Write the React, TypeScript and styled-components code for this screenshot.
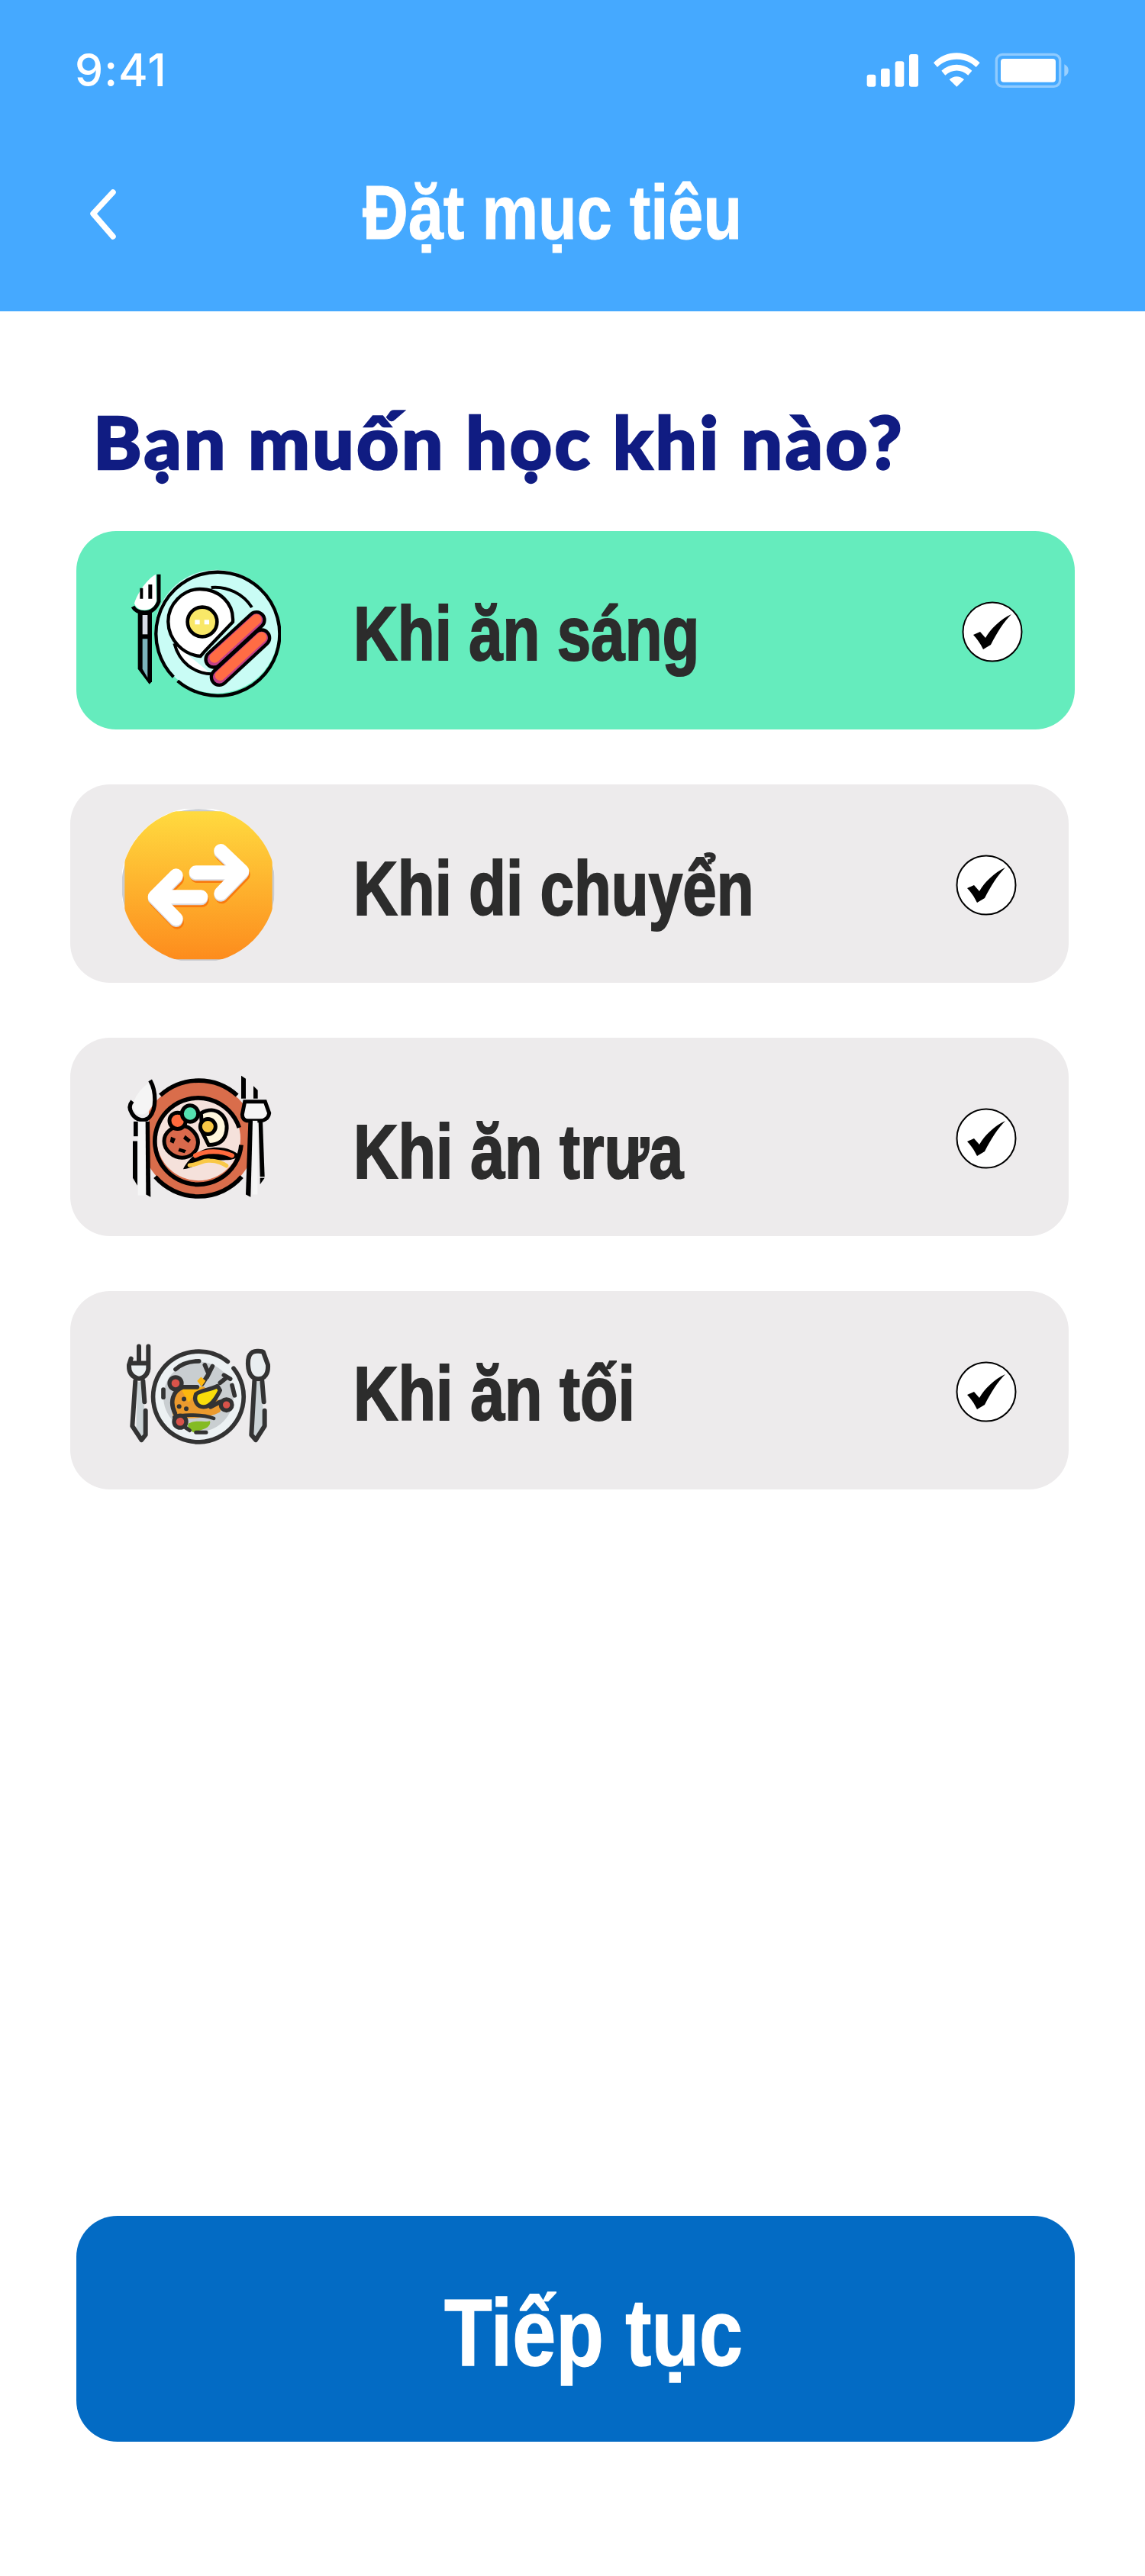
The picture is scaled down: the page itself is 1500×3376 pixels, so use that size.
import React from "react";
import styled, { createGlobalStyle } from "styled-components";

const Global = createGlobalStyle`
  html, body { margin: 0; padding: 0; background: #fff; }
  #root { width: 1500px; height: 3376px; overflow: hidden; }
`;

const sans = `"Liberation Sans", sans-serif`;

const Page = styled.main`
  width: 1500px;
  height: 3376px;
  display: flex;
  flex-direction: column;
  background: #fff;
`;

const Header = styled.header`
  height: 408px;
  background: #45a9ff;
  color: #fff;
  flex: none;
  display: flex;
  flex-direction: column;
`;

const StatusBar = styled.div`
  height: 67px;
  padding: 67px 0 0 98px;
  display: flex;
  justify-content: space-between;
  align-items: flex-start;
`;

const Time = styled.span`
  margin-top: 2px;
  font-family: "Inter", "Liberation Sans", sans-serif;
  font-size: 59px;
  font-weight: 500;
  line-height: 46px;
  letter-spacing: 1px;
`;

const StatusIcons = styled.svg`
  width: 270px;
  height: 50px;
  margin-right: 97px;
`;

const NavBar = styled.div`
  margin-top: 86px;
  height: 120px;
  padding-left: 112px;
  display: flex;
  align-items: center;
`;

const BackIcon = styled.svg`
  width: 46px;
  height: 72px;
  flex: none;
`;

const Title = styled.h1`
  margin: -4px 0 0 317px;
  font-family: ${sans};
  font-size: 101px;
  font-weight: 700;
  line-height: 116px;
  white-space: nowrap;
  transform: scaleX(0.82);
  transform-origin: left center;
  -webkit-text-stroke: 1px #fff;
`;

const Question = styled.h2`
  margin: 114px 0 0 122px;
  font-family: "Lato", "Noto Sans", sans-serif;
  font-size: 96px;
  font-weight: 900;
  line-height: 112px;
  letter-spacing: 3.4px;
  color: #101c82;
  white-space: nowrap;
  -webkit-text-stroke: 2.5px #101c82;
`;

const Options = styled.div`
  margin: 62px 0 0 92px;
  width: 1316px;
  display: flex;
  flex-direction: column;
  gap: 72px;
`;

const Option = styled.div<{ $selected?: boolean }>`
  width: 1308px;
  height: 260px;
  box-sizing: border-box;
  margin-left: ${(p) => (p.$selected ? "8px" : "0")};
  padding: 0 68px;
  border-radius: 52px;
  display: flex;
  align-items: center;
  background: ${(p) => (p.$selected ? "#65ecbd" : "#edebec")};
`;

const IconSlot = styled.svg`
  width: 200px;
  flex: none;
`;

const OptionLabel = styled.span<{ $inset: number; $drop: number; $squeeze: number }>`
  margin-left: ${(p) => p.$inset}px;
  padding-top: ${(p) => p.$drop}px;
  flex: 1;
  font-family: ${sans};
  font-size: 100px;
  font-weight: 700;
  line-height: 120px;
  color: #2c2c2c;
  white-space: nowrap;
  transform: scaleX(${(p) => p.$squeeze});
  transform-origin: left center;
  -webkit-text-stroke: 2px #2c2c2c;
`;

const Check = styled.svg`
  width: 80px;
  height: 80px;
  flex: none;
  margin-top: 4px;
`;

const Continue = styled.button`
  margin: auto 0 176px 100px;
  width: 1308px;
  height: 296px;
  padding: 8px 0 0 46px;
  border: 0;
  border-radius: 54px;
  background: #036bc4;
  color: #fff;
  font-family: ${sans};
  font-size: 125px;
  font-weight: 700;
`;

const ContinueLabel = styled.span`
  display: inline-block;
  transform: scaleX(0.82);
  -webkit-text-stroke: 1.5px #fff;
`;

const CheckMark = () => (
  <Check viewBox="0 0 80 80">
    <circle cx="40" cy="40" r="38.5" fill="#fff" stroke="#000" strokeWidth="2" />
    <path d="M15 44 L24 40 L31 48 C38 36 50 24 65 17 C55 27 46 41 38 57 L28 63 C24 55 20 49 15 44 Z" fill="#000" />
  </Check>
);

const BreakfastIcon = () => (
  <IconSlot viewBox="264 168 600 540" height="180">
    <circle cx="611" cy="443" r="243" fill="#c9fcf5" />
    <path d="M458 637 A243 243 0 1 0 442 622" fill="none" stroke="#000" strokeWidth="13" />
    <path d="M750 348 A172 172 0 0 0 590 270" fill="none" stroke="#000" strokeWidth="12" />
    <path d="M445 490 C465 565 520 605 590 610" fill="#fff" stroke="#000" strokeWidth="12" />
    <path d="M545 276 C480 276 420 335 421 405 C422 475 480 535 548 540 L565 520 L675 405 C680 330 620 276 545 276 Z" fill="#fff" stroke="#000" strokeWidth="13" />
    <circle cx="555" cy="405" r="58" fill="#f9e868" stroke="#000" strokeWidth="14" />
    <rect x="526" y="397" width="19" height="18" fill="#fff" />
    <rect x="563" y="397" width="19" height="18" fill="#fff" />
    <path d="M600 552 L768 398" stroke="#000" strokeWidth="76" strokeLinecap="round" />
    <path d="M600 552 L768 398" stroke="#c2408a" strokeWidth="50" strokeLinecap="round" />
    <path d="M603 546 L768 395" stroke="#ff6c44" strokeWidth="40" strokeLinecap="round" />
    <path d="M622 622 L788 468" stroke="#000" strokeWidth="76" strokeLinecap="round" />
    <path d="M622 622 L788 468" stroke="#c2408a" strokeWidth="50" strokeLinecap="round" />
    <path d="M625 616 L788 465" stroke="#ff6c44" strokeWidth="40" strokeLinecap="round" />
    <path d="M288 332 C300 290 340 235 372 218 L375 320 C370 350 345 358 325 358 C305 358 292 345 288 332 Z" fill="#fff" />
    <path d="M343 258 H358 V314 H343 Z M310 272 H322 V314 H310 Z" fill="#000" />
    <path d="M384 218 V325 C372 355 350 368 328 368 C305 368 290 360 282 345" fill="none" stroke="#000" strokeWidth="15" />
    <path d="M302 368 H357 V640 L347 650 L302 590 Z" fill="#000" />
    <rect x="320" y="378" width="20" height="76" fill="#d8dde6" />
    <path d="M320 472 H340 V625 L320 590 Z" fill="#7bb4bc" />
  </IconSlot>
);

const CommuteIcon = () => (
  <IconSlot viewBox="240 108 600 612" height="204">
    <defs>
      <linearGradient id="commute" x1="0" y1="0" x2="0" y2="1">
        <stop offset="0" stopColor="#ffdc40" />
        <stop offset="1" stopColor="#fd8a1c" />
      </linearGradient>
      <clipPath id="commuteClip">
        <rect x="250" y="130" width="580" height="582" />
      </clipPath>
      <clipPath id="commuteHalo">
        <rect x="240" y="120" width="598" height="597" />
      </clipPath>
    </defs>
    <circle cx="539" cy="419" r="304" fill="#fff" clipPath="url(#commuteHalo)" />
    <circle cx="540" cy="423" r="302" fill="#c9ccd2" clipPath="url(#commuteHalo)" />
    <circle cx="540" cy="421" r="305" fill="url(#commute)" clipPath="url(#commuteClip)" />
    <g fill="none" strokeWidth="54" strokeLinecap="round" strokeLinejoin="round">
      <g stroke="#f97a0e" transform="translate(4 14)">
        <path d="M530 370 H708 M628 285 L712 365 L628 452" />
        <path d="M550 466 H372 M452 382 L368 466 L452 552" />
      </g>
      <g stroke="#d9dae0" transform="translate(0 6)">
        <path d="M530 370 H708 M628 285 L712 365 L628 452" />
        <path d="M550 466 H372 M452 382 L368 466 L452 552" />
      </g>
      <g stroke="#fff">
        <path d="M530 370 H708 M628 285 L712 365 L628 452" />
        <path d="M550 466 H372 M452 382 L368 466 L452 552" />
      </g>
    </g>
  </IconSlot>
);

const LunchIcon = () => (
  <IconSlot viewBox="30 20 600 500" height="167">
    <defs>
      <clipPath id="lunchPlate">
        <rect x="135" y="40" width="392" height="470" />
      </clipPath>
    </defs>
    <circle cx="330" cy="275" r="222" fill="#d96d4b" clipPath="url(#lunchPlate)" />
    <circle cx="330" cy="275" r="165" fill="#f5e1db" />
    <g fill="none" stroke="#000" strokeLinecap="butt">
      <path d="M180 105 A225 225 0 0 1 482 105" strokeWidth="17" />
      <path d="M160 425 A225 225 0 0 0 500 425" strokeWidth="17" />
      <path d="M490 232 A170 170 0 1 0 498 300" strokeWidth="17" />
    </g>
    <path d="M340 175 C400 140 450 190 440 245 C435 280 415 300 370 300 L345 250 Z" fill="#fff6dc" stroke="#000" strokeWidth="15" />
    <circle cx="367" cy="228" r="30" fill="#f9c846" stroke="#000" strokeWidth="15" />
    <path d="M265 225 C300 225 335 265 327 300 C322 335 290 350 265 350 C230 350 195 320 195 285 C195 250 230 225 265 225 Z" fill="#d9694c" stroke="#000" strokeWidth="15" />
    <path d="M222 268 L240 275 L232 295 L218 288 Z M278 262 L300 280 L290 292 L270 275 Z M255 312 L282 320 L275 332 L250 325 Z" fill="#000" />
    <circle cx="248" cy="205" r="32" fill="#ff6a3d" stroke="#000" strokeWidth="15" />
    <circle cx="297" cy="177" r="32" fill="#55e0b0" stroke="#000" strokeWidth="15" />
    <path d="M270 395 C300 395 330 370 375 362 C420 355 470 370 490 340 C470 320 420 300 360 315 C320 325 280 370 270 395 Z" fill="#000" />
    <path d="M318 342 C360 320 420 322 462 342" fill="none" stroke="#ff6a3d" strokeWidth="18" strokeLinecap="round" />
    <path d="M295 380 C340 375 345 358 375 362 C400 362 425 372 440 382" fill="none" stroke="#f9c846" strokeWidth="16" strokeLinecap="round" />
    <path d="M135 55 C90 90 65 130 78 165 C90 185 125 190 145 150 C155 110 145 75 135 55 Z" fill="#f5f5f5" />
    <path d="M140 46 C165 90 165 160 138 190 C120 210 85 205 68 175 C55 155 60 140 70 128" fill="none" stroke="#000" strokeWidth="16" />
    <rect x="92" y="208" width="30" height="290" fill="#f5f5f5" />
    <rect x="75" y="208" width="17" height="58" fill="#000" />
    <path d="M72 285 H90 V460 L72 430 Z" fill="#000" />
    <path d="M122 208 H138 L142 505 L124 495 Z" fill="#000" />
    <path d="M498 28 L516 40 V118 H498 Z" fill="#000" />
    <path d="M546 68 L563 85 V118 H546 Z" fill="#000" />
    <path d="M512 130 H592 L608 175 C605 195 590 205 570 205 H525 C510 205 502 195 502 180 Z" fill="#f5f5f5" stroke="#000" strokeWidth="15" />
    <rect x="542" y="205" width="20" height="290" fill="#f5f5f5" />
    <path d="M526 205 H543 L535 505 L516 495 Z" fill="#000" />
    <path d="M566 205 H582 L590 425 H572 Z" fill="#000" />
    <path d="M572 430 H590 L572 455 Z" fill="#000" />
  </IconSlot>
);

const DinnerIcon = () => (
  <IconSlot viewBox="240 206 600 440" height="147">
    <circle cx="540" cy="450" r="178" fill="#ecf1f3" />
    <circle cx="540" cy="450" r="138" fill="#c9ced1" />
    <g fill="none" stroke="#333" strokeWidth="17" strokeLinecap="round">
      <path d="M655 312 A178 178 0 0 0 540 272 A178 178 0 1 0 678 338" />
      <path d="M450 342 C480 315 510 310 542 310" />
      <path d="M402 422 V452" />
      <path d="M672 405 L682 445" />
    </g>
    <path d="M440 525 C425 470 445 425 490 415 L560 410 C610 440 635 480 625 510 C600 525 550 535 500 535 Z" fill="#eb9a2e" />
    <path d="M470 418 L560 412 C520 440 510 470 500 470 Z" fill="#fdb70e" />
    <g fill="none" stroke="#333" strokeWidth="17" strokeLinecap="round">
      <path d="M448 515 C425 470 440 425 480 412 L535 412" />
      <path d="M588 490 L625 470" />
      <path d="M555 400 L580 360 M565 325 L580 360 L595 330" />
      <path d="M625 395 L650 375 M640 365 L665 380" />
    </g>
    <path d="M535 388 L550 372 L568 388 L552 410 Z" fill="#fdb70e" />
    <path d="M530 440 C545 425 580 425 615 408 L625 425 C610 455 590 490 560 490 C535 490 520 465 530 440 Z" fill="#f9dd0a" stroke="#333" strokeWidth="16" strokeLinejoin="round" />
    <circle cx="483" cy="459" r="9" fill="#333" />
    <circle cx="464" cy="488" r="9" fill="#333" />
    <circle cx="492" cy="497" r="9" fill="#333" />
    <circle cx="450" cy="397" r="24" fill="#d9534a" stroke="#333" strokeWidth="16" />
    <circle cx="650" cy="482" r="22" fill="#d9534a" stroke="#333" strokeWidth="16" />
    <circle cx="468" cy="548" r="24" fill="#d9534a" stroke="#333" strokeWidth="16" />
    <path d="M445 530 C480 518 560 520 600 535" fill="none" stroke="#333" strokeWidth="14" strokeLinecap="round" />
    <path d="M500 556 C530 540 560 552 585 545 C592 570 560 580 520 590 C505 580 495 570 500 556 Z" fill="#84bb23" />
    <path d="M490 572 L505 582 M530 590 H570" fill="none" stroke="#333" strokeWidth="15" strokeLinecap="round" />
    <path d="M277 322 H335 V350 C330 375 290 375 278 350 Z" fill="#e9eef0" />
    <path d="M300 392 H322 L332 590 L312 612 L295 590 Z" fill="#cbd3d6" />
    <g fill="none" stroke="#333" strokeWidth="18" strokeLinecap="round" strokeLinejoin="round">
      <path d="M306 252 V318 M343 252 V340 C340 370 310 385 295 375 C275 368 266 350 267 325 L275 300 M273 318 H340" />
      <path d="M292 388 L280 565 L316 620 L332 600 V505" />
      <path d="M322 388 L328 470" />
    </g>
    <ellipse cx="775" cy="325" rx="30" ry="50" fill="#e9eef0" />
    <path d="M762 392 H785 L800 565 L765 612 L750 590 Z" fill="#cbd3d6" />
    <g fill="none" stroke="#333" strokeWidth="18" strokeLinecap="round" strokeLinejoin="round">
      <path d="M770 271 C745 271 733 290 735 325 C737 365 755 380 775 380 C800 380 815 360 813 325 L795 275 C790 270 780 271 770 271 Z" />
      <path d="M760 388 L748 600 L765 620 L800 565 V505" />
      <path d="M790 388 L797 470" />
    </g>
  </IconSlot>
);

const options = [
  { label: "Khi ăn sáng", Icon: BreakfastIcon, selected: true, inset: 95, drop: 8, squeeze: 0.8 },
  { label: "Khi di chuyển", Icon: CommuteIcon, selected: false, inset: 103, drop: 12, squeeze: 0.8 },
  { label: "Khi ăn trưa", Icon: LunchIcon, selected: false, inset: 103, drop: 38, squeeze: 0.81 },
  { label: "Khi ăn tối", Icon: DinnerIcon, selected: false, inset: 103, drop: 8, squeeze: 0.81 },
];

export default function App() {
  return (
    <Page>
      <Global />
      <Header>
        <StatusBar>
          <Time>9:41</Time>
          <StatusIcons viewBox="100 80 810 150">
            <g fill="#fff">
              <rect x="108" y="172" width="35" height="48" rx="9" />
              <rect x="163" y="148" width="35" height="72" rx="9" />
              <rect x="219" y="120" width="35" height="100" rx="9" />
              <rect x="274" y="92" width="36" height="128" rx="9" />
              <path d="M370 126 C420 74 500 74 552 126 L537 143 C497 102 425 102 385 143 Z" />
              <path d="M401 157 C435 125 487 125 521 157 L506 175 C478 150 444 150 416 175 Z" />
              <path d="M432 192 C450 176 472 176 490 192 L461 220 Z" />
            </g>
            <rect x="617" y="93" width="250" height="126" rx="24" fill="none" stroke="#fff" strokeOpacity="0.4" strokeWidth="10" />
            <rect x="634" y="110" width="216" height="92" rx="12" fill="#fff" />
            <path d="M884 132 C896 138 900 146 900 156 C900 166 896 174 884 180 Z" fill="#fff" fillOpacity="0.45" />
          </StatusIcons>
        </StatusBar>
        <NavBar>
          <BackIcon viewBox="0 0 46 72">
            <path d="M36 8 L10 36 L36 66" fill="none" stroke="#fff" strokeWidth="7.5" strokeLinecap="round" strokeLinejoin="round" />
          </BackIcon>
          <Title>Đặt mục tiêu</Title>
        </NavBar>
      </Header>
      <Question>Bạn muốn học khi nào?</Question>
      <Options>
        {options.map(({ label, Icon, selected, inset, drop, squeeze }) => (
          <Option key={label} $selected={selected}>
            <Icon />
            <OptionLabel $inset={inset} $drop={drop} $squeeze={squeeze}>{label}</OptionLabel>
            <CheckMark />
          </Option>
        ))}
      </Options>
      <Continue type="button"><ContinueLabel>Tiếp tục</ContinueLabel></Continue>
    </Page>
  );
}
